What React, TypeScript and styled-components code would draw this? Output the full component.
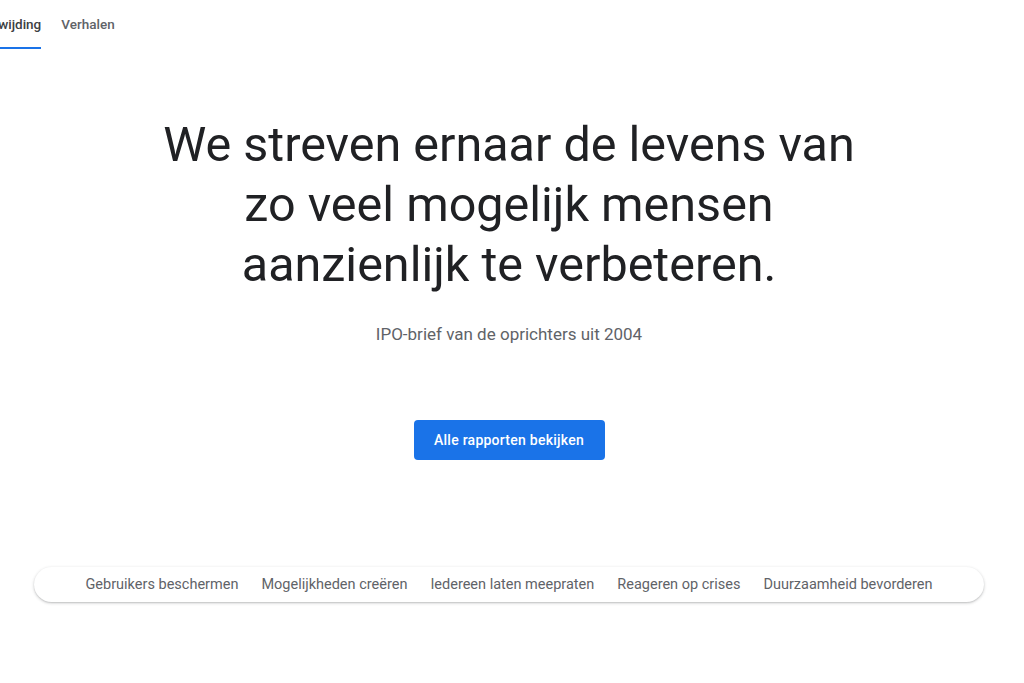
import React from "react";
import styled, { createGlobalStyle } from "styled-components";

const Global = createGlobalStyle`
  html, body { margin: 0; padding: 0; background: #fff; }
  body { font-family: Roboto, "Noto Sans", Arial, sans-serif; color: #202124; }
  * { box-sizing: border-box; }
`;

const Page = styled.div`
  width: 1018px;
  height: 683px;
  overflow: hidden;
  display: flex;
  flex-direction: column;
`;

const Tabs = styled.nav`
  display: flex;
  gap: 20px;
  height: 49px;
  margin-left: -24px;
`;

const Tab = styled.a<{ $active?: boolean }>`
  display: flex;
  align-items: center;
  padding-top: 2px;
  padding-bottom: 2px;
  font-size: 13.5px;
  font-weight: 500;
  color: ${(p) => (p.$active ? "#3c4043" : "#5f6368")};
  text-decoration: none;
  border-bottom: 2px solid ${(p) => (p.$active ? "#1a73e8" : "transparent")};
  cursor: pointer;
`;

const Hero = styled.section`
  display: flex;
  flex-direction: column;
  align-items: center;
  padding-top: 66px;
`;

const Heading = styled.h1`
  margin: 0;
  font-size: 48.5px;
  font-weight: 400;
  line-height: 60px;
  text-align: center;
  color: #202124;
`;

const Sub = styled.p`
  margin: 29px 0 0;
  font-size: 17px;
  color: #5f6368;
`;

const Button = styled.button`
  margin-top: 76px;
  height: 40px;
  width: 191px;
  border: none;
  border-radius: 4px;
  background: #1a73e8;
  color: #fff;
  font-family: inherit;
  font-size: 14px;
  font-weight: 500;
  letter-spacing: 0.25px;
  cursor: pointer;
`;

const PillWrap = styled.div`
  margin-top: 107px;
  padding: 0 34px;
`;

const Pill = styled.div`
  height: 35px;
  border-radius: 18px;
  box-shadow: 0 1px 3px rgba(60, 64, 67, 0.3), 0 1px 1px rgba(60, 64, 67, 0.08);
  display: flex;
  justify-content: center;
  align-items: center;
  gap: 23px;
`;

const PillItem = styled.a`
  font-size: 14.5px;
  color: #5f6368;
  text-decoration: none;
  cursor: pointer;
`;

const items = [
  "Gebruikers beschermen",
  "Mogelijkheden creëren",
  "Iedereen laten meepraten",
  "Reageren op crises",
  "Duurzaamheid bevorderen",
];

export default function App() {
  return (
    <>
      <Global />
      <Page>
        <Tabs>
          <Tab $active>Toewijding</Tab>
          <Tab>Verhalen</Tab>
        </Tabs>
        <Hero>
          <Heading>
            We streven ernaar de levens van
            <br />
            zo veel mogelijk mensen
            <br />
            aanzienlijk te verbeteren.
          </Heading>
          <Sub>IPO-brief van de oprichters uit 2004</Sub>
          <Button>Alle rapporten bekijken</Button>
        </Hero>
        <PillWrap>
          <Pill>
            {items.map((t) => (
              <PillItem key={t}>{t}</PillItem>
            ))}
          </Pill>
        </PillWrap>
      </Page>
    </>
  );
}
